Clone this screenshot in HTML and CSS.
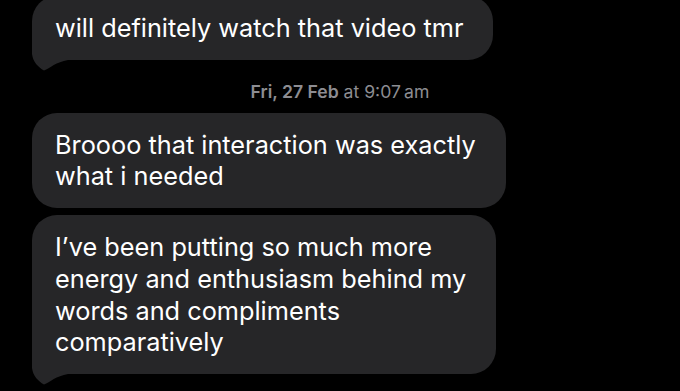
FILE: index.html
```html
<!DOCTYPE html>
<html lang="en">

<head>
    <meta charset="UTF-8">
    <meta name="viewport" content="width=device-width, initial-scale=1.0">
    <title>Messages</title>
    <link rel="stylesheet" href="styles.css">
</head>

<body>
    <div class="thread">
        <div class="msg">
            will definitely watch that video tmr
            <svg class="tail" width="40" height="37" viewBox="0 0 40 37"><path d="M0 0 V19 C1 27 6 32 12 35.6 C18 33 24 27 36 25 H40 V0 Z"/></svg>
        </div>

        <div class="stamp"><b>Fri, 27 Feb</b> at 9:07&#8201;am</div>

        <div class="msg">Broooo that interaction was exactly<br>what i needed</div>

        <div class="msg last">
            I’ve been putting so much more<br>energy and enthusiasm behind my<br>words and compliments<br>comparatively
            <svg class="tail" width="40" height="37" viewBox="0 0 40 37"><path d="M0 0 V19 C1 27 6 32 12 35.6 C18 33 24 27 36 25 H40 V0 Z"/></svg>
        </div>
    </div>
</body>

</html>
```

FILE: styles.css
```css
body {
    margin: 0;
    background: #000;
    font-family: 'Inter', 'Roboto', sans-serif;
}

.thread {
    display: flex;
    flex-direction: column;
    align-items: flex-start;
    margin-top: -4px;
    padding-bottom: 20px;
}

.msg {
    position: relative;
    isolation: isolate;
    margin-left: 32px;
    background: #262628;
    color: #fff;
    font-size: 25.3px;
    line-height: 31.7px;
    padding: 16px 30px 16px 23px;
    border-radius: 25px;
    white-space: nowrap;
}

/* tail sits behind the text, over the bubble fill */
.tail {
    position: absolute;
    left: 0;
    bottom: -12px;
    z-index: -1;
    fill: #262628;
}

.stamp {
    align-self: stretch;
    text-align: center;
    margin: 22px 0 11px;
    color: #8d8d92;
    font-size: 17.6px;
    line-height: 20px;
}

.stamp b {
    font-weight: 600;
}

.last {
    margin-top: 7px;
}
```
